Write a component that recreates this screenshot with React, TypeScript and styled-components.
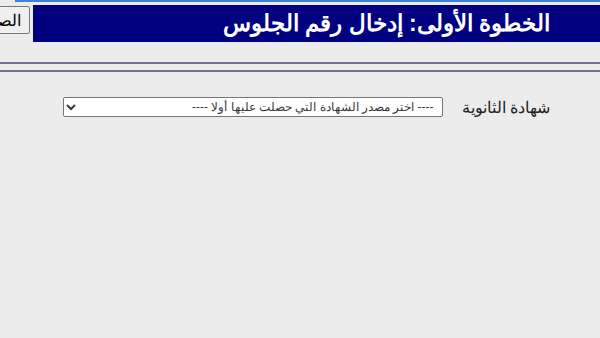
import React from "react";
import styled, { createGlobalStyle } from "styled-components";

const GlobalStyle = createGlobalStyle`

	html, body {
		margin: 0;
		padding: 0;
		background: #ececec;
		overflow: hidden;
	}

	body {
		font-family: "Liberation Sans", Arial, sans-serif;
	}

`;

const Page = styled.div`

	direction: rtl;
	width: 600px;
	height: 338px;
	overflow: hidden;
	background: #ececec;

`;

const TopEdge = styled.div`

	height: 2px;
	margin-right: 0;
	margin-left: 15px;
	background: #3d82d6;

`;

const Header = styled.div`

	display: flex;
	align-items: flex-start;
	margin-top: 3px;
	gap: 3px;

`;

const TitleBar = styled.div`

	flex: 0 0 567px;
	height: 37px;
	background: #000080;

	display: flex;
	align-items: center;
	padding-right: 50px;
	box-sizing: border-box;

`;

const Title = styled.h1`

	margin: 0;
	color: #ffffff;
	font-size: 23px;
	font-weight: bold;
	font-family: "Liberation Sans", Arial, sans-serif;
	white-space: nowrap;

`;

const HomeButton = styled.button`

	flex: 0 0 auto;
	margin-top: 1px;
	height: 28px;
	padding: 0 8px;
	background: #efefef;
	border: 1px solid #767676;
	border-radius: 2px;
	font-size: 16px;
	font-family: "Liberation Sans", Arial, sans-serif;
	color: #000;
	white-space: nowrap;

`;

const Rule = styled.div`

	height: 2px;
	background: #6e6e90;

`;

const Rules = styled.div`

	display: flex;
	flex-direction: column;
	gap: 6px;
	margin-top: 20px;

`;

const FormRow = styled.div`

	display: flex;
	align-items: center;
	gap: 19px;
	padding-right: 50px;
	margin-top: 25px;

`;

const Label = styled.label`

	font-size: 16px;
	color: #222;
	font-family: "Liberation Sans", Arial, sans-serif;
	white-space: nowrap;

`;

const Select = styled.select`

	width: 380px;
	height: 20px;
	background: #ffffff;
	border: 1px solid #767676;
	border-radius: 2px;
	font-size: 12px;
	color: #3a3a3a;
	font-family: "Liberation Sans", Arial, sans-serif;
	padding: 0 4px;

`;

const App = () => {

	return (
		<>
			<GlobalStyle />
			<Page>

				<TopEdge />

				<Header>
					<TitleBar>
						<Title>الخطوة الأولى: إدخال رقم الجلوس</Title>
					</TitleBar>
					<HomeButton>الصفحة الرئيسية</HomeButton>
				</Header>

				<Rules>
					<Rule />
					<Rule />
				</Rules>

				<FormRow>
					<Label>شهادة الثانوية</Label>
					<Select defaultValue="">
						<option value="">---- اختر مصدر الشهادة التي حصلت عليها أولا ----</option>
					</Select>
				</FormRow>

			</Page>
		</>
	);
}

export default App;
